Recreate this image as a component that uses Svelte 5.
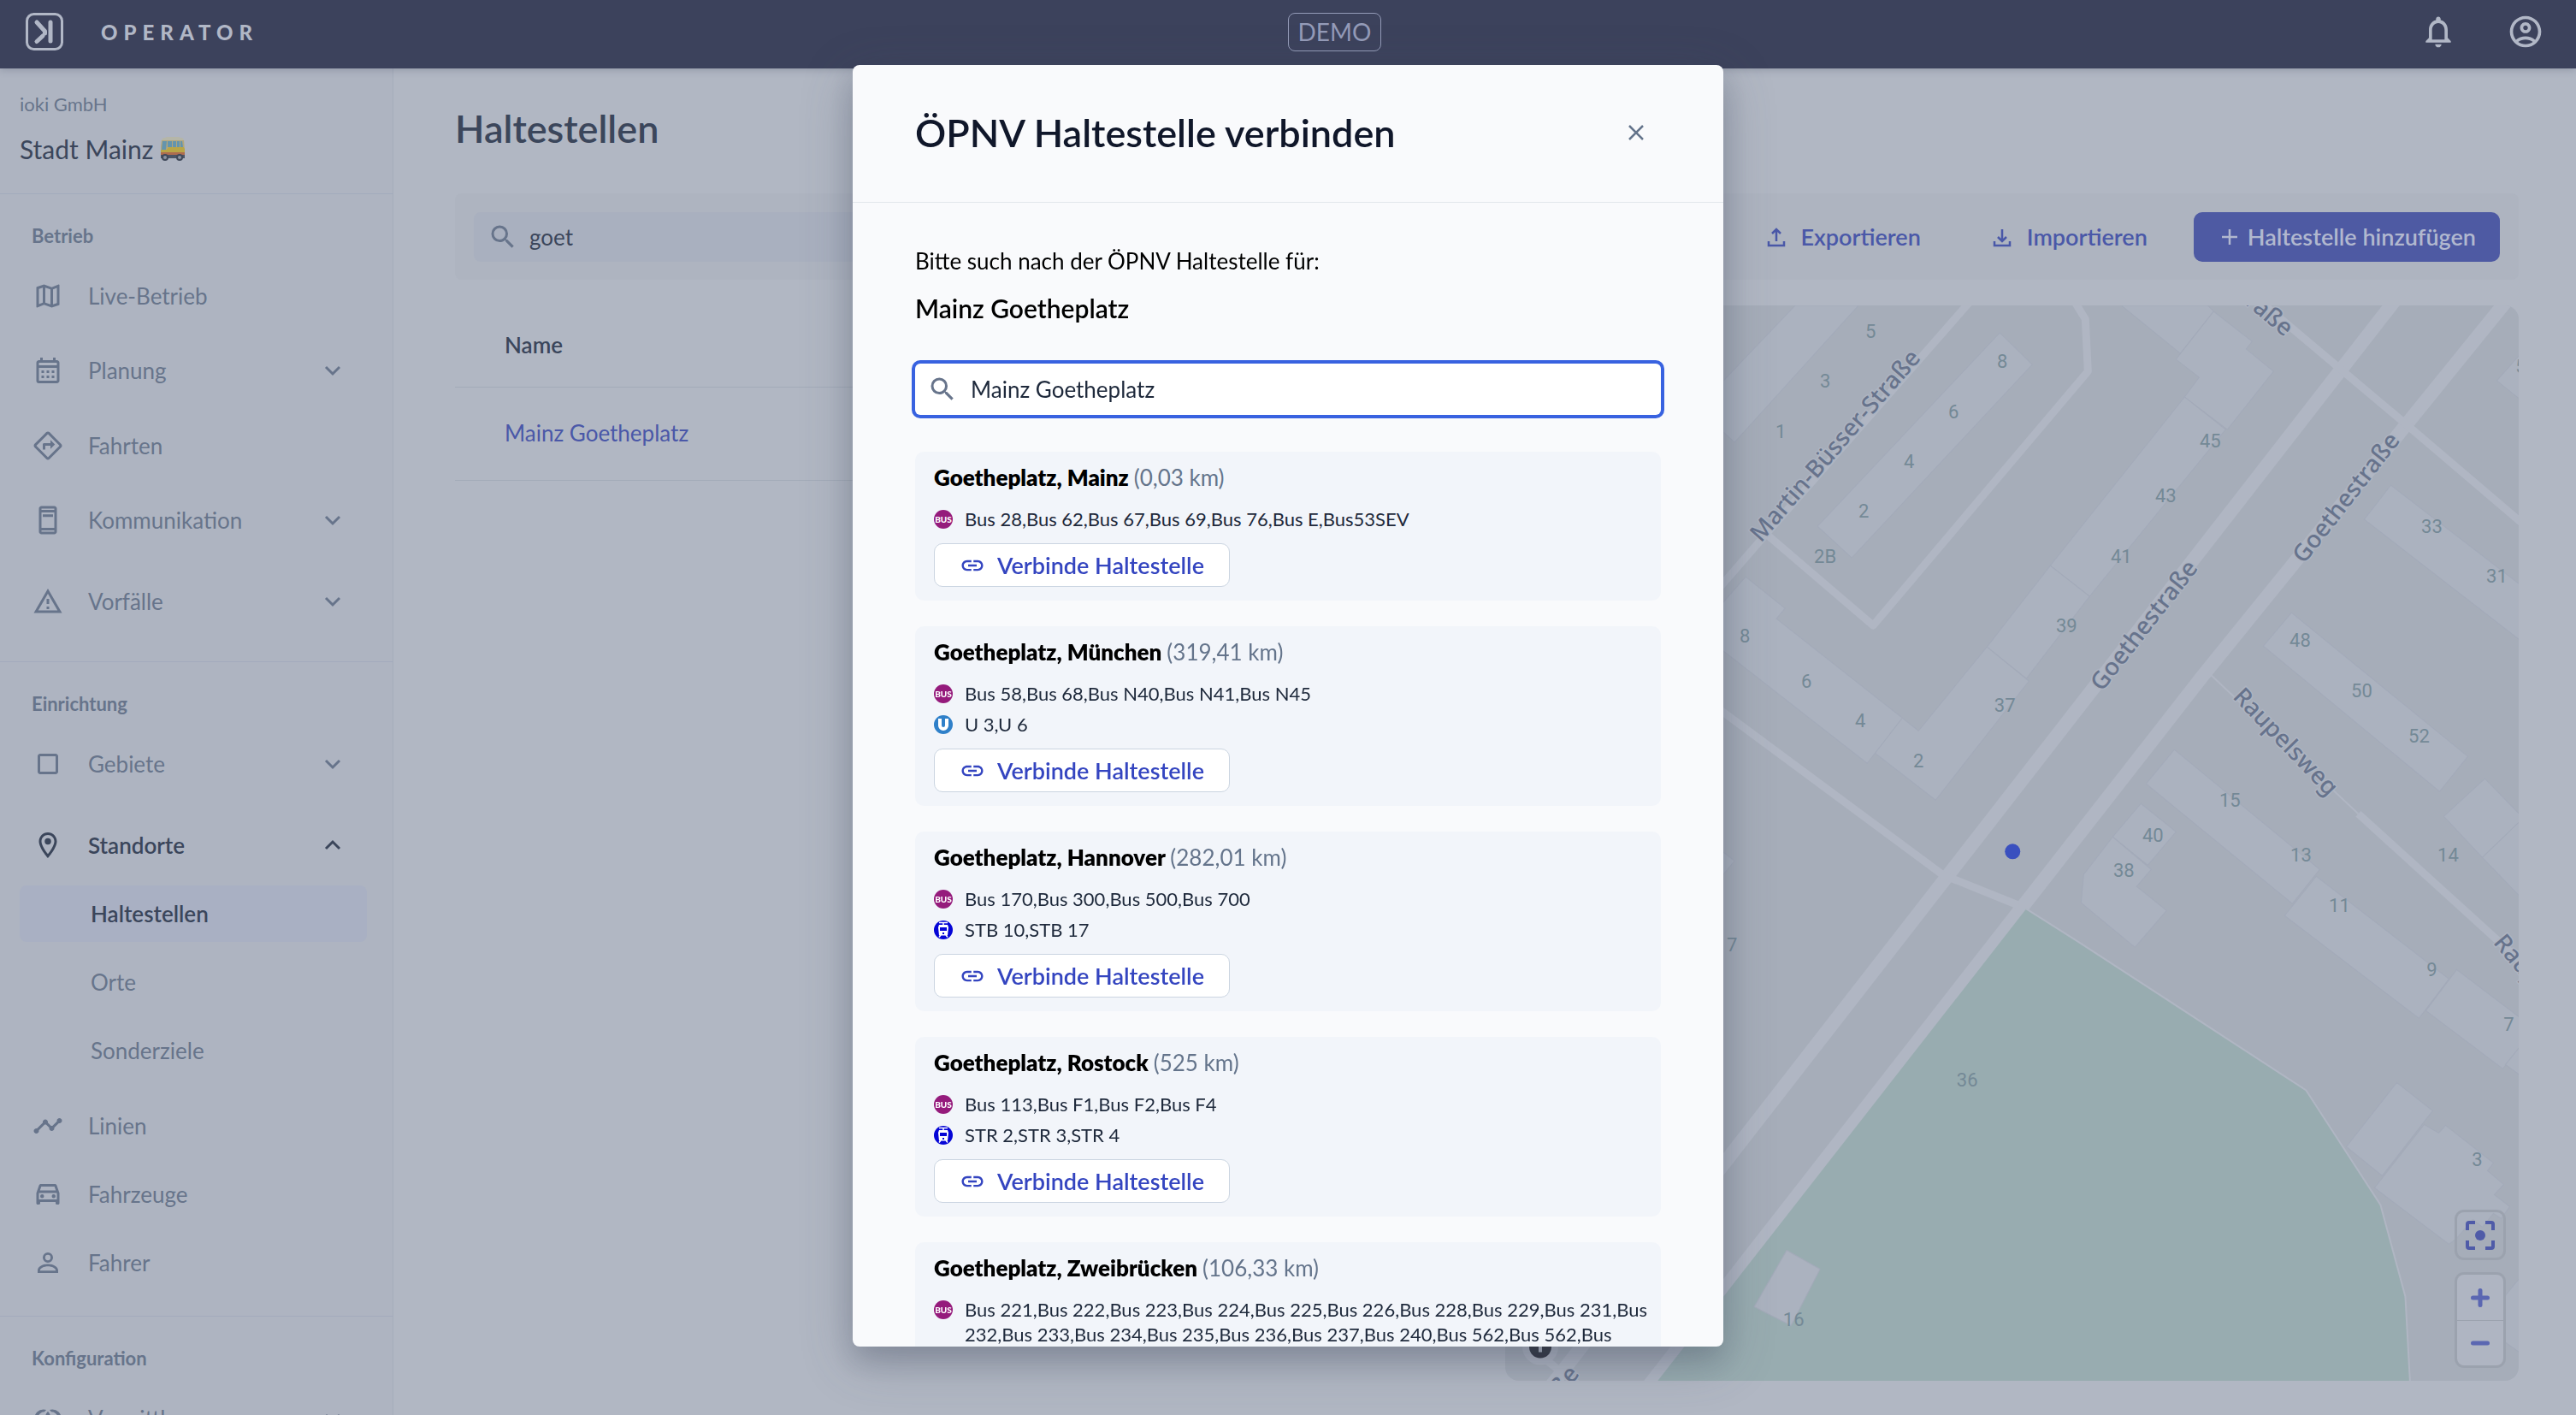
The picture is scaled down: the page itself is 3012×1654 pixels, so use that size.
<script>
  const icons = {
    map: "M20.5 3l-.16.03L15 5.1 9 3 3.36 4.9c-.21.07-.36.25-.36.48V20.5c0 .28.22.5.5.5l.16-.03L9 18.9l6 2.1 5.64-1.9c.21-.07.36-.25.36-.48V3.5c0-.28-.22-.5-.5-.5zM10 5.47l4 1.4v11.66l-4-1.4V5.47zm-5 .99l3-1.01v11.7l-3 1.16V6.46zm14 11.08l-3 1.01V6.86l3-1.16v11.84z",
    calendar: "M19 4h-1V2h-2v2H8V2H6v2H5c-1.11 0-1.99.9-1.99 2L3 20a2 2 0 0 0 2 2h14c1.1 0 2-.9 2-2V6c0-1.1-.9-2-2-2zm0 16H5V10h14v10zm0-12H5V6h14v2zM9 14H7v-2h2v2zm4 0h-2v-2h2v2zm4 0h-2v-2h2v2zm-8 4H7v-2h2v2zm4 0h-2v-2h2v2zm4 0h-2v-2h2v2z",
    directions: "M22.43 10.59l-9.01-9.01c-.75-.75-2.07-.76-2.83 0l-9 9c-.78.78-.78 2.04 0 2.82l9 9c.39.39.9.58 1.41.58.51 0 1.02-.19 1.41-.58l8.99-8.99c.79-.76.8-2.02.03-2.82zM12.01 20.99l-9-9 9-9 9 9-9 9zM8 11v4h2v-3h4v2.5l3.5-3.5L14 7.5V10H9c-.55 0-1 .45-1 1z",
    phone: "M17 1H7c-1.1 0-2 .9-2 2v18c0 1.1.9 2 2 2h10c1.1 0 2-.9 2-2V3c0-1.1-.9-2-2-2zM7 4V3h10v1H7zm0 14V6h10v12H7zm0 3v-1h10v1H7zM16 7.5H8v2h8v-2z",
    warning: "M12 2L1 21h22L12 2zM12 5.99L19.53 19H4.47L12 5.99zM13 16h-2v2h2v-2zM13 10h-2v4h2v-4z",
    square: "M18 4H6c-1.1 0-2 .9-2 2v12c0 1.1.9 2 2 2h12c1.1 0 2-.9 2-2V6c0-1.1-.9-2-2-2zM18 18H6V6h12v12z",
    place: "M12 2C8.13 2 5 5.13 5 9c0 5.25 7 13 7 13s7-7.75 7-13c0-3.87-3.13-7-7-7zM7 9c0-2.76 2.24-5 5-5s5 2.24 5 5c0 2.88-2.88 7.19-5 9.88C9.92 16.21 7 11.85 7 9zM12 6.5a2.5 2.5 0 1 0 0 5 2.5 2.5 0 0 0 0-5z",
    timeline: "M23 8c0 1.1-.9 2-2 2-.18 0-.35-.02-.51-.07l-3.56 3.55c.05.16.07.34.07.52 0 1.1-.9 2-2 2s-2-.9-2-2c0-.18.02-.36.07-.52l-2.55-2.55c-.16.05-.34.07-.52.07s-.36-.02-.52-.07l-4.55 4.56c.05.16.07.33.07.51 0 1.1-.9 2-2 2s-2-.9-2-2 .9-2 2-2c.18 0 .35.02.51.07l4.56-4.55C8.02 9.36 8 9.18 8 9c0-1.1.9-2 2-2s2 .9 2 2c0 .18-.02.36-.07.52l2.55 2.55c.16-.05.34-.07.52-.07s.36.02.52.07l3.55-3.56C19.02 8.35 19 8.18 19 8c0-1.1.9-2 2-2s2 .9 2 2z",
    car: "M18.92 5.01C18.72 4.42 18.16 4 17.5 4h-11c-.66 0-1.21.42-1.42 1.01L3 11v8c0 .55.45 1 1 1h1c.55 0 1-.45 1-1v-1h12v1c0 .55.45 1 1 1h1c.55 0 1-.45 1-1v-8l-2.08-5.99zM6.85 6h10.29l1.04 3H5.81l1.04-3zM19 16H5v-5h14v5zM7.5 12a1.5 1.5 0 1 0 0 3 1.5 1.5 0 0 0 0-3zM16.5 12a1.5 1.5 0 1 0 0 3 1.5 1.5 0 0 0 0-3z",
    person: "M12 4a4 4 0 1 0 0 8 4 4 0 0 0 0-8zM12 5.9a2.1 2.1 0 1 1 0 4.2 2.1 2.1 0 0 1 0-4.2zM12 13c-4.4 0-8 2.2-8 5v2h16v-2c0-2.8-3.6-5-8-5zM12 14.9c3.2 0 6.1 1.5 6.1 3.2H5.9c0-1.7 2.9-3.2 6.1-3.2z",
    join: "M8.5 5a7 7 0 1 0 0 14c.9 0 1.5-.1 2.2-.4L9.4 17.2A5.2 5.2 0 1 1 9.4 6.8L10.7 5.4C10 5.1 9.4 5 8.5 5zM15.5 5a7 7 0 1 1 0 14c-.9 0-1.5-.1-2.2-.4l1.3-1.4a5.2 5.2 0 1 0 0-10.4L13.3 5.4c.7-.3 1.3-.4 2.2-.4zM12 6.5a8 8 0 0 0 0 11 8 8 0 0 0 0-11z",
    search: "M15.5 14h-.79l-.28-.27A6.47 6.47 0 0 0 16 9.5 6.5 6.5 0 1 0 9.5 16c1.61 0 3.09-.59 4.23-1.57l.27.28v.79l5 4.99L20.49 19l-4.99-5zm-6 0a4.5 4.5 0 1 1 0-9 4.5 4.5 0 0 1 0 9z",
    link: "M3.9 12c0-1.71 1.39-3.1 3.1-3.1h4V7H7c-2.76 0-5 2.24-5 5s2.24 5 5 5h4v-1.9H7c-1.71 0-3.1-1.39-3.1-3.1zM8 13h8v-2H8v2zm9-6h-4v1.9h4c1.71 0 3.1 1.39 3.1 3.1s-1.39 3.1-3.1 3.1h-4V17h4c2.76 0 5-2.24 5-5s-2.24-5-5-5z",
    bell: "M12 22c1.1 0 2-.9 2-2h-4c0 1.1.9 2 2 2zm6-6v-5c0-3.07-1.63-5.64-4.5-6.32V4c0-.83-.67-1.5-1.5-1.5s-1.5.67-1.5 1.5v.68C7.64 5.36 6 7.92 6 11v5l-2 2v1h16v-1l-2-2zm-2 1H8v-6c0-2.48 1.51-4.5 4-4.5s4 2.02 4 4.5v6z",
    account: "M12 2C6.48 2 2 6.48 2 12s4.48 10 10 10 10-4.48 10-10S17.52 2 12 2zM7.35 18.5C8.66 17.56 10.26 17 12 17s3.34.56 4.65 1.5c-1.31.94-2.91 1.5-4.65 1.5s-3.34-.56-4.65-1.5zm10.79-1.38C16.45 15.8 14.32 15 12 15s-4.45.8-6.14 2.12C4.7 15.73 4 13.95 4 12c0-4.42 3.58-8 8-8s8 3.58 8 8c0 1.95-.7 3.73-1.86 5.12zM12 6c-1.93 0-3.5 1.57-3.5 3.5S10.07 13 12 13s3.5-1.57 3.5-3.5S13.93 6 12 6zm0 5c-.83 0-1.5-.67-1.5-1.5S11.17 8 12 8s1.5.67 1.5 1.5S12.83 11 12 11z"
  };

  const sections = [
    {
      title: "Betrieb",
      items: [
        { text: "Live-Betrieb", icon: "map" },
        { text: "Planung", icon: "calendar", group: true },
        { text: "Fahrten", icon: "directions" },
        { text: "Kommunikation", icon: "phone", group: true },
        { text: "Vorfälle", icon: "warning", group: true }
      ]
    },
    {
      title: "Einrichtung",
      items: [
        { text: "Gebiete", icon: "square", group: true },
        {
          text: "Standorte",
          icon: "place",
          group: true,
          children: ["Haltestellen", "Orte", "Sonderziele"]
        },
        { text: "Linien", icon: "timeline" },
        { text: "Fahrzeuge", icon: "car" },
        { text: "Fahrer", icon: "person" }
      ]
    },
    {
      title: "Konfiguration",
      items: [{ text: "Vermittlung", icon: "join", group: true }]
    }
  ];

  const results = [
    {
      name: "Goetheplatz, Mainz",
      distance: "0,03 km",
      lines: [{ type: "bus", text: "Bus 28,Bus 62,Bus 67,Bus 69,Bus 76,Bus E,Bus53SEV" }]
    },
    {
      name: "Goetheplatz, München",
      distance: "319,41 km",
      lines: [
        { type: "bus", text: "Bus 58,Bus 68,Bus N40,Bus N41,Bus N45" },
        { type: "subway", text: "U 3,U 6" }
      ]
    },
    {
      name: "Goetheplatz, Hannover",
      distance: "282,01 km",
      lines: [
        { type: "bus", text: "Bus 170,Bus 300,Bus 500,Bus 700" },
        { type: "tram", text: "STB 10,STB 17" }
      ]
    },
    {
      name: "Goetheplatz, Rostock",
      distance: "525 km",
      lines: [
        { type: "bus", text: "Bus 113,Bus F1,Bus F2,Bus F4" },
        { type: "tram", text: "STR 2,STR 3,STR 4" }
      ]
    },
    {
      name: "Goetheplatz, Zweibrücken",
      distance: "106,33 km",
      lines: [
        {
          type: "bus",
          text: "Bus 221,Bus 222,Bus 223,Bus 224,Bus 225,Bus 226,Bus 228,Bus 229,Bus 231,Bus 232,Bus 233,Bus 234,Bus 235,Bus 236,Bus 237,Bus 240,Bus 562,Bus 562,Bus"
        }
      ]
    }
  ];

  const buildings = [
    "2015,445 2099,357 2173,357 2028,517 2015,505",
    "2338,389 2376,426 2165,652 2125,615",
    "2480,357 2581,357 2588,364 2549,413",
    "2588,364 2633,399 2626,408 2658,434 2604,502 2554,464 2571,441 2544,420",
    "2554,464 2602,502 2443,697 2397,661",
    "2397,661 2443,697 2369,793 2323,756",
    "2323,756 2372,796 2263,935 2192,880 2224,839 2243,854",
    "2041,674 2087,711 2077,723 2224,839 2183,892 2005,753 2005,715",
    "2795,567 2955,690 2955,755 2764,607",
    "2679,716 2885,884 2852,925 2646,755",
    "2905,910 2945,951 2945,961 2902,1002 2857,954",
    "2955,951 2902,1002 2955,1057",
    "2542,876 2712,1016 2680,1056 2509,916",
    "2503,939 2544,972 2511,1011 2470,978",
    "2470,978 2515,1016 2498,1036 2533,1064 2496,1107 2433,1055 2436,1022",
    "2708,1024 2863,1144 2828,1190 2671,1070",
    "2872,1133 2955,1196 2955,1212 2926,1249 2836,1181",
    "2955,1212 2929,1244 2955,1263",
    "2802,1265 2844,1298 2785,1374 2743,1340",
    "2834,1314 2851,1324 2859,1315 2915,1359 2908,1368 2927,1384 2916,1396 2934,1410 2924,1424 2915,1418 2902,1434 2891,1425 2871,1448 2863,1454 2776,1388",
    "2955,1482 2928,1515 2928,1568 2955,1587",
    "2955,404 2919,445 2955,474",
    "2005,988 2028,1006 2005,1034"
  ];

  const houses = [
    ["5", 2187, 387], ["3", 2134, 445], ["1", 2082, 504], ["8", 2341, 422],
    ["6", 2284, 481], ["4", 2232, 539], ["2", 2179, 597], ["2B", 2134, 650],
    ["45", 2584, 515], ["43", 2532, 579], ["41", 2480, 650], ["39", 2416, 731],
    ["37", 2344, 824], ["8", 2040, 743], ["6", 2112, 796], ["4", 2175, 842],
    ["2", 2243, 889], ["33", 2843, 615], ["31", 2919, 673], ["48", 2689, 748],
    ["50", 2761, 807], ["52", 2828, 860], ["15", 2607, 935], ["40", 2517, 976],
    ["38", 2483, 1017], ["13", 2690, 999], ["14", 2862, 999], ["11", 2735, 1058],
    ["9", 2843, 1133], ["7", 2933, 1197], ["36", 2300, 1262], ["3", 2896, 1355],
    ["16", 2097, 1542], ["7", 2025, 1104], ["5", 2947, 428]
  ];

  const streets = [
    { text: "Martin-Büsser-Straße", x: 2146, y: 521, angle: -49 },
    { text: "Goethestraße", x: 2507, y: 731, angle: -52 },
    { text: "Goethestraße", x: 2743, y: 582, angle: -52 },
    { text: "Raupelsweg", x: 2672, y: 867, angle: 46 },
    { text: "Forsterstraße", x: 2607, y: 329, angle: 40 },
    { text: "Raupelsweg", x: 2973, y: 1158, angle: 50 },
    { text: "Nahestraße", x: 1792, y: 1662, angle: -52 }
  ];

  let filter = $state("goet");
  let query = $state("Mainz Goetheplatz");
  let open = $state(true);
</script>

{#snippet icon(name, cls)}
  <svg class="icon {cls ?? ''}" viewBox="0 0 24 24" aria-hidden="true">
    <path fill="currentColor" fill-rule="evenodd" d={icons[name]} />
  </svg>
{/snippet}

{#snippet transfer(head)}
  <svg class="icon small" viewBox="0 0 30 30" aria-hidden="true">
    <path class="line" d="M6 20v5h18v-5M15 20V6{head}" />
  </svg>
{/snippet}

<div class="app">
  <header>
    <div class="home">
      <svg class="logo" viewBox="0 0 44 44" aria-hidden="true">
        <rect x="1.5" y="1.5" width="41" height="41" rx="8" />
        <path class="thick" d="M29 11v22M13 11l9.5 10.5v2.5M20 27l-7 6.5" />
      </svg>
      <span class="brand">OPERATOR</span>
    </div>
    <span class="env">DEMO</span>
    <div class="actions">
      <button aria-label="Benachrichtigungen">{@render icon("bell", "large")}</button>
      <button aria-label="Konto">{@render icon("account", "large")}</button>
    </div>
  </header>

  <div class="body">
    <aside>
      <div class="tenant">
        <p class="company">ioki GmbH</p>
        <p class="city">
          Stadt Mainz
          <svg class="bus" viewBox="0 0 30 30" aria-hidden="true">
            <path fill="#b5b6a8" d="M2 6c0-3 1-4 4-4l2-1h14l2 1c3 0 4 1 4 4z" />
            <path fill="#b1a67d" d="M2 5h26l1 12v6H1V12z" />
            <path fill="#6494ad" d="M3 6h5L7 16H2zM9 6h5v7H9zM15 6h4v7h-4zM20 6h3v7h-3zM24 6h2l1 7h-3z" />
            <path fill="#b9a646" d="M1 16h7l2-3h17.5l1.5 2v5H1z" />
            <path fill="#ad6c4f" d="M1 19h28v3H1z" />
            <path fill="#4b5566" d="M1 22h28v4H1z" />
            <circle cx="6" cy="25" r="4" fill="#414a5a" />
            <circle cx="6" cy="25" r="2" fill="#8b93a1" />
            <circle cx="23" cy="25" r="4" fill="#414a5a" />
            <circle cx="23" cy="25" r="2" fill="#8b93a1" />
          </svg>
        </p>
      </div>

      {#each sections as section}
        <nav aria-label={section.title}>
          <h2>{section.title}</h2>
          <ul class="items">
            {#each section.items as item}
              <li class:group={item.group}>
                <a class="row" class:active={item.children} href="#{item.text}">
                  {@render icon(item.icon)}
                  <span>{item.text}</span>
                  {#if item.group}
                    <svg class="chevron" viewBox="0 0 20 20" aria-hidden="true">
                      <path class="line" d={item.children ? "M2 14l8-8 8 8" : "M2 6l8 8 8-8"} />
                    </svg>
                  {/if}
                </a>
                {#if item.children}
                  <ul class="sub">
                    {#each item.children as child, i}
                      <li><a class:selected={i === 0} href="#{child}">{child}</a></li>
                    {/each}
                  </ul>
                {/if}
              </li>
            {/each}
          </ul>
        </nav>
      {/each}
    </aside>

    <main>
      <h1>Haltestellen</h1>

      <div class="toolbar">
        <label class="filter">
          {@render icon("search")}
          <input type="text" aria-label="Haltestellen suchen" bind:value={filter} />
        </label>
        <button class="plain">{@render transfer("M10 11l5-5 5 5")}Exportieren</button>
        <button class="plain">{@render transfer("M10 15l5 5 5-5")}Importieren</button>
        <button class="primary">
          <svg class="plus" viewBox="0 0 20 20" aria-hidden="true">
            <path class="line" d="M10 1v18M1 10h18" />
          </svg>
          Haltestelle hinzufügen
        </button>
      </div>

      <div class="columns">
        <table>
          <thead>
            <tr><th>Name</th></tr>
          </thead>
          <tbody>
            <tr><td><a href="#goetheplatz">Mainz Goetheplatz</a></td></tr>
          </tbody>
        </table>

        <div class="map">
          <svg class="tiles" viewBox="1760 357 1185 1257" preserveAspectRatio="xMaxYMin slice">
            <g class="roads">
              <path class="wide" d="M2803 347L1807 1628M2934 347L2575 790L1924 1624" />
              <path d="M2308 347L2065 624L1990 710M2065 624L2190 731L2441 434L2438 373L2422 347" />
              <path d="M1990 814L2271 1022L2360 1058" />
              <path d="M2636 347L2813 496L2955 617M2757 951L2965 1140" />
              <path class="thin" d="M2584 788L2757 951" />
              <path d="M1770 1560L1858 1628" />
            </g>
            <g class="buildings">
              {#each buildings as points}
                <polygon {points} />
              {/each}
            </g>
            <path class="park" d="M2369 1062L2429 1100L2696 1274L2783 1408L2812 1515L2818 1624H1930z" />
            <path class="path" d="M2369 1062L2429 1100L2696 1274L2783 1408L2812 1515L2818 1624" />
            <g class="buildings">
              <polygon points="2089,1461 2128,1483 2094,1549 2051,1527" />
            </g>
            <g class="houses">
              {#each houses as [nr, x, y]}
                <text {x} y={y + 8}>{nr}</text>
              {/each}
            </g>
            <g class="streets">
              {#each streets as s}
                <text transform="translate({s.x} {s.y}) rotate({s.angle})" y="9">{s.text}</text>
              {/each}
            </g>
            <circle cx="1801" cy="1574" r="21" fill="#b0b6c3" />
            <circle cx="1801" cy="1574" r="13" fill="#2b2f3a" />
            <path stroke="#b0b6c3" stroke-width="4" d="M1801 1566v14" />
            <circle cx="2353" cy="995" r="9" fill="#3a50bf" />
          </svg>
          <div class="controls">
            <button class="ctrl fit" aria-label="Karte einpassen">
              <svg viewBox="0 0 34 34" aria-hidden="true">
                <path d="M2 11V4a2 2 0 0 1 2-2h7M23 2h7a2 2 0 0 1 2 2v7M32 23v7a2 2 0 0 1-2 2h-7M11 32H4a2 2 0 0 1-2-2v-7" />
                <circle cx="17" cy="17" r="6" />
              </svg>
            </button>
            <div class="zoom">
              <button class="ctrl" aria-label="Vergrößern">
                <svg viewBox="0 0 34 34" aria-hidden="true"><path class="bold" d="M17 8.5v17M8.5 17h17" /></svg>
              </button>
              <button class="ctrl" aria-label="Verkleinern">
                <svg viewBox="0 0 34 34" aria-hidden="true"><path class="bold" d="M8.5 17h17" /></svg>
              </button>
            </div>
          </div>
        </div>
      </div>
    </main>
  </div>
</div>

{#if open}
  <div class="backdrop">
    <div class="modal" role="dialog" aria-modal="true" aria-labelledby="modal-title">
      <div class="modal-head">
        <h2 id="modal-title">ÖPNV Haltestelle verbinden</h2>
        <button aria-label="Schließen" onclick={() => (open = false)}>
          <svg viewBox="0 0 20 20" aria-hidden="true">
            <path class="line" d="M2 2l16 16M18 2L2 18" />
          </svg>
        </button>
      </div>
      <div class="modal-body">
        <p class="hint">Bitte such nach der ÖPNV Haltestelle für:</p>
        <p class="station">Mainz Goetheplatz</p>
        <label class="query">
          {@render icon("search")}
          <input type="text" aria-label="ÖPNV Haltestelle suchen" bind:value={query} />
        </label>

        {#each results as result}
          <section>
            <h3>{result.name} <span>({result.distance})</span></h3>
            <ul>
              {#each result.lines as line}
                <li>
                  <svg class="badge" viewBox="0 0 22 22" aria-hidden="true">
                    {#if line.type === "bus"}
                      <circle cx="11" cy="11" r="11" fill="#951b7c" />
                      <text x="11" y="15" class="bus-label">BUS</text>
                    {:else if line.type === "subway"}
                      <circle cx="11" cy="11" r="11" fill="#2f80c9" />
                      <path fill="none" stroke="#fff" stroke-width="4" d="M7 4v8a4 4 0 0 0 8 0V4" />
                    {:else}
                      <circle cx="11" cy="11" r="11" fill="#0505d6" />
                      <path stroke="#fff" stroke-width="1.5" fill="none" d="M6 2.5h10M11 3v2M8 17l-2 2.5M14 17l2 2.5" />
                      <path fill="#fff" fill-rule="evenodd" d="M6 5h10l1 3-1 9.5H6L5 8zM7 8h8v4H7zM10 14h2v2h-2z" />
                    {/if}
                  </svg>
                  <span>{line.text}</span>
                </li>
              {/each}
            </ul>
            <button class="connect">{@render icon("link", "small")}Verbinde Haltestelle</button>
          </section>
        {/each}
      </div>
    </div>
  </div>
{/if}

<style>
  :global(body) {
    margin: 0;
    font-family: Lato, "Open Sans", sans-serif;
    font-size: 26px;
    color: #3b465b;
    background: #b1b7c3;
  }

  * {
    box-sizing: border-box;
  }

  h1,
  h2,
  h3,
  p,
  ul {
    margin: 0;
    padding: 0;
    list-style: none;
  }

  a {
    color: inherit;
    text-decoration: none;
  }

  button {
    display: flex;
    align-items: center;
    justify-content: center;
    padding: 0;
    border: 0;
    background: none;
    color: inherit;
    font: inherit;
    cursor: pointer;
  }

  input {
    flex: 1;
    min-width: 0;
    padding: 0;
    border: 0;
    outline: 0;
    background: none;
    color: inherit;
    font: inherit;
  }

  .icon {
    flex: none;
    width: 36px;
    height: 36px;
  }

  .small {
    width: 30px;
    height: 30px;
  }

  .large {
    width: 44px;
    height: 44px;
  }

  .line {
    fill: none;
    stroke: currentColor;
    stroke-width: 2.5;
  }

  .app {
    display: flex;
    flex-direction: column;
    height: 100vh;
    overflow: hidden;
  }

  header {
    position: relative;
    z-index: 1;
    flex: none;
    display: grid;
    grid-template-columns: 1fr auto 1fr;
    align-items: center;
    height: 80px;
    padding: 0 37px 6px 30px;
    background: #3c425c;
    color: #b1b7c6;
    box-shadow: 0 2px 8px rgba(60, 66, 92, 0.25);
  }

  .home {
    display: flex;
    align-items: center;
    gap: 44px;
  }

  .logo {
    width: 44px;
    height: 44px;
    fill: none;
    stroke: #b1b7c6;
    stroke-width: 3;
    stroke-linecap: round;
    stroke-linejoin: round;
  }

  .thick {
    stroke-width: 5;
  }

  .brand {
    font-size: 24px;
    font-weight: 900;
    letter-spacing: 7px;
  }

  .env {
    margin-left: 116px;
    padding: 0 11px;
    border: 1px solid #949bb8;
    border-radius: 8px;
    color: #949bb8;
    font-size: 28px;
    line-height: 43px;
  }

  .actions {
    display: flex;
    justify-content: flex-end;
    gap: 58px;
  }

  .body {
    flex: 1;
    display: flex;
    min-height: 0;
  }

  aside {
    flex: none;
    width: 460px;
    overflow: hidden;
    border-right: 1px solid #a4acbb;
    background: #aeb4c1;
    color: #67748b;
  }

  .tenant {
    height: 147px;
    padding: 28px 23px 0;
    border-bottom: 1px solid #a3abbd;
  }

  .company {
    font-size: 22px;
    line-height: 28px;
  }

  .city {
    display: flex;
    align-items: center;
    gap: 8px;
    margin-top: 18px;
    color: #3b465b;
    font-size: 30px;
    line-height: 40px;
  }

  .bus {
    width: 30px;
    height: 30px;
  }

  nav {
    padding: 35px 0 22px;
    border-bottom: 1px solid #a3abbd;
  }

  nav h2 {
    margin-bottom: 16px;
    padding-left: 37px;
    font-size: 22px;
    font-weight: 700;
    line-height: 28px;
  }

  .items {
    display: flex;
    flex-direction: column;
  }

  .group {
    margin-bottom: 8px;
  }

  .group:not(:first-child) {
    margin-top: 7px;
  }

  .row {
    display: flex;
    align-items: center;
    gap: 29px;
    height: 80px;
    padding: 0 60px 0 38px;
  }

  .active,
  .selected {
    color: #3b465b;
    font-weight: 600;
  }

  .chevron {
    width: 20px;
    height: 20px;
    margin-left: auto;
  }

  .chevron .line {
    stroke-width: 3;
  }

  .sub li {
    padding: 7px 30px 7px 23px;
  }

  .sub a {
    display: block;
    padding-left: 83px;
    border-radius: 8px;
    line-height: 66px;
  }

  .sub .selected {
    background: #a9b0c3;
  }

  main {
    flex: 1;
    display: flex;
    flex-direction: column;
    min-width: 0;
    padding: 40px 67px 40px 72px;
  }

  h1 {
    margin-bottom: 46px;
    font-size: 45px;
    font-weight: 600;
    line-height: 60px;
  }

  .toolbar {
    display: flex;
    align-items: center;
    gap: 28px;
    height: 101px;
    margin-bottom: 30px;
    padding: 0 22px;
    border-radius: 8px;
    background: #aeb4c0;
  }

  .filter {
    flex: 1;
    display: flex;
    align-items: center;
    gap: 13px;
    height: 58px;
    padding: 0 16px;
    border-radius: 8px;
    background: #a9b0bf;
    color: #3b465b;
  }

  .filter .icon,
  .query .icon {
    color: #67748b;
  }

  .plain,
  .primary,
  .connect {
    font-size: 27px;
    font-weight: 600;
  }

  .plain,
  .primary {
    gap: 14px;
    height: 58px;
    padding: 0 26px;
    color: #4a58a8;
  }

  .primary {
    gap: 11px;
    padding: 0 28px 0 32px;
    border-radius: 10px;
    background: #4e5aa3;
    color: #b1b8cf;
  }

  .plus {
    width: 20px;
    height: 20px;
  }

  .columns {
    flex: 1;
    display: grid;
    grid-template-columns: 1fr 1fr;
    gap: 42px;
    min-height: 0;
  }

  table {
    align-self: start;
    border-collapse: collapse;
    text-align: left;
  }

  th {
    height: 95px;
    padding: 0 58px 2px;
    border-bottom: 1px solid #a3abb8;
    font-weight: 600;
  }

  td {
    height: 109px;
    padding: 0 58px 2px;
    border-bottom: 1px solid #a3abb8;
    color: #4a58a8;
  }

  .map {
    position: relative;
    overflow: hidden;
    border-radius: 16px;
    background: #a6adb9;
  }

  .tiles {
    display: block;
    width: 100%;
    height: 100%;
  }

  .roads path {
    fill: none;
    stroke: #b0b6c3;
    stroke-width: 9;
    stroke-linejoin: round;
  }

  .roads .wide {
    stroke-width: 16;
  }

  .roads .thin,
  .path {
    fill: none;
    stroke: #b0b6c3;
    stroke-width: 2;
  }

  .park {
    fill: #98acb0;
  }

  .buildings polygon {
    fill: #abb2bf;
    stroke: #a3aab9;
    stroke-width: 1;
  }

  .houses {
    fill: #748996;
    font-family: Roboto, sans-serif;
    font-size: 22px;
    text-anchor: middle;
  }

  .streets {
    fill: #67738c;
    stroke: #adb4c1;
    stroke-width: 3;
    paint-order: stroke;
    font-family: "Noto Sans", sans-serif;
    font-size: 28px;
    font-weight: 500;
    text-anchor: middle;
  }

  .controls {
    position: absolute;
    right: 18px;
    bottom: 18px;
    display: flex;
    flex-direction: column;
    gap: 20px;
  }

  .ctrl {
    width: 54px;
    height: 53px;
    color: #4f5ba8;
  }

  .ctrl svg {
    width: 34px;
    height: 34px;
    fill: none;
    stroke: currentColor;
    stroke-width: 4;
  }

  .ctrl circle {
    fill: currentColor;
    stroke: none;
  }

  .ctrl .bold {
    stroke: #5b67b2;
    stroke-width: 5;
    stroke-linecap: round;
  }

  .fit,
  .zoom {
    border-radius: 8px;
    box-shadow: 0 0 0 3px #9ba2ae;
  }

  .zoom {
    background: #afb5c2;
  }

  .zoom .ctrl + .ctrl {
    border-top: 1px solid #9ba2ae;
  }

  .backdrop {
    position: fixed;
    z-index: 2;
    inset: 0;
    display: flex;
    justify-content: center;
    padding: 76px 0 80px;
  }

  .modal {
    display: flex;
    flex-direction: column;
    width: 1018px;
    overflow: hidden;
    border-radius: 8px;
    background: #f9fafc;
    color: #000;
    box-shadow: 0 16px 60px rgba(71, 80, 98, 0.3), 0 16px 30px rgba(71, 80, 98, 0.25);
  }

  .modal-head {
    flex: none;
    display: flex;
    align-items: center;
    justify-content: space-between;
    height: 161px;
    padding: 0 73px 3px;
    border-bottom: 1px solid #e2e7ec;
  }

  .modal-head h2 {
    color: #10172a;
    font-size: 45px;
    font-weight: 600;
  }

  .modal-head button {
    width: 58px;
    height: 58px;
    color: #64748b;
  }

  .modal-head svg {
    width: 20px;
    height: 20px;
  }

  .modal-body {
    display: flex;
    flex-direction: column;
    padding: 50px 73px 0;
  }

  .hint {
    line-height: 36px;
  }

  .station {
    margin: 18px 0 46px;
    font-size: 30px;
    font-weight: 600;
    line-height: 38px;
  }

  .query {
    flex: none;
    display: flex;
    align-items: center;
    gap: 15px;
    height: 60px;
    margin-bottom: 43px;
    padding: 0 14px;
    border-radius: 6px;
    background: #fff;
    color: #1e293b;
    box-shadow: 0 0 0 4px #3862e0;
  }

  section {
    flex: none;
    margin-bottom: 30px;
    padding: 12px 14px 16px 22px;
    border-radius: 10px;
    background: #f2f5fa;
  }

  h3 {
    font-size: 26px;
    font-weight: 800;
    line-height: 36px;
  }

  h3 span {
    color: #64748b;
    font-weight: 400;
  }

  section ul {
    display: flex;
    flex-direction: column;
    gap: 7px;
    margin: 16px 0 14px;
  }

  section li {
    display: flex;
    gap: 14px;
    color: #1e293b;
    font-size: 22px;
    line-height: 29px;
  }

  .badge {
    flex: none;
    width: 22px;
    height: 22px;
    margin-top: 4px;
  }

  .bus-label {
    fill: #fff;
    font-size: 10px;
    font-weight: 900;
    text-anchor: middle;
  }

  .connect {
    gap: 14px;
    height: 51px;
    padding: 0 29px;
    border: 1px solid #cbd5e1;
    border-radius: 10px;
    background: #fff;
    color: #3445c0;
  }
</style>
